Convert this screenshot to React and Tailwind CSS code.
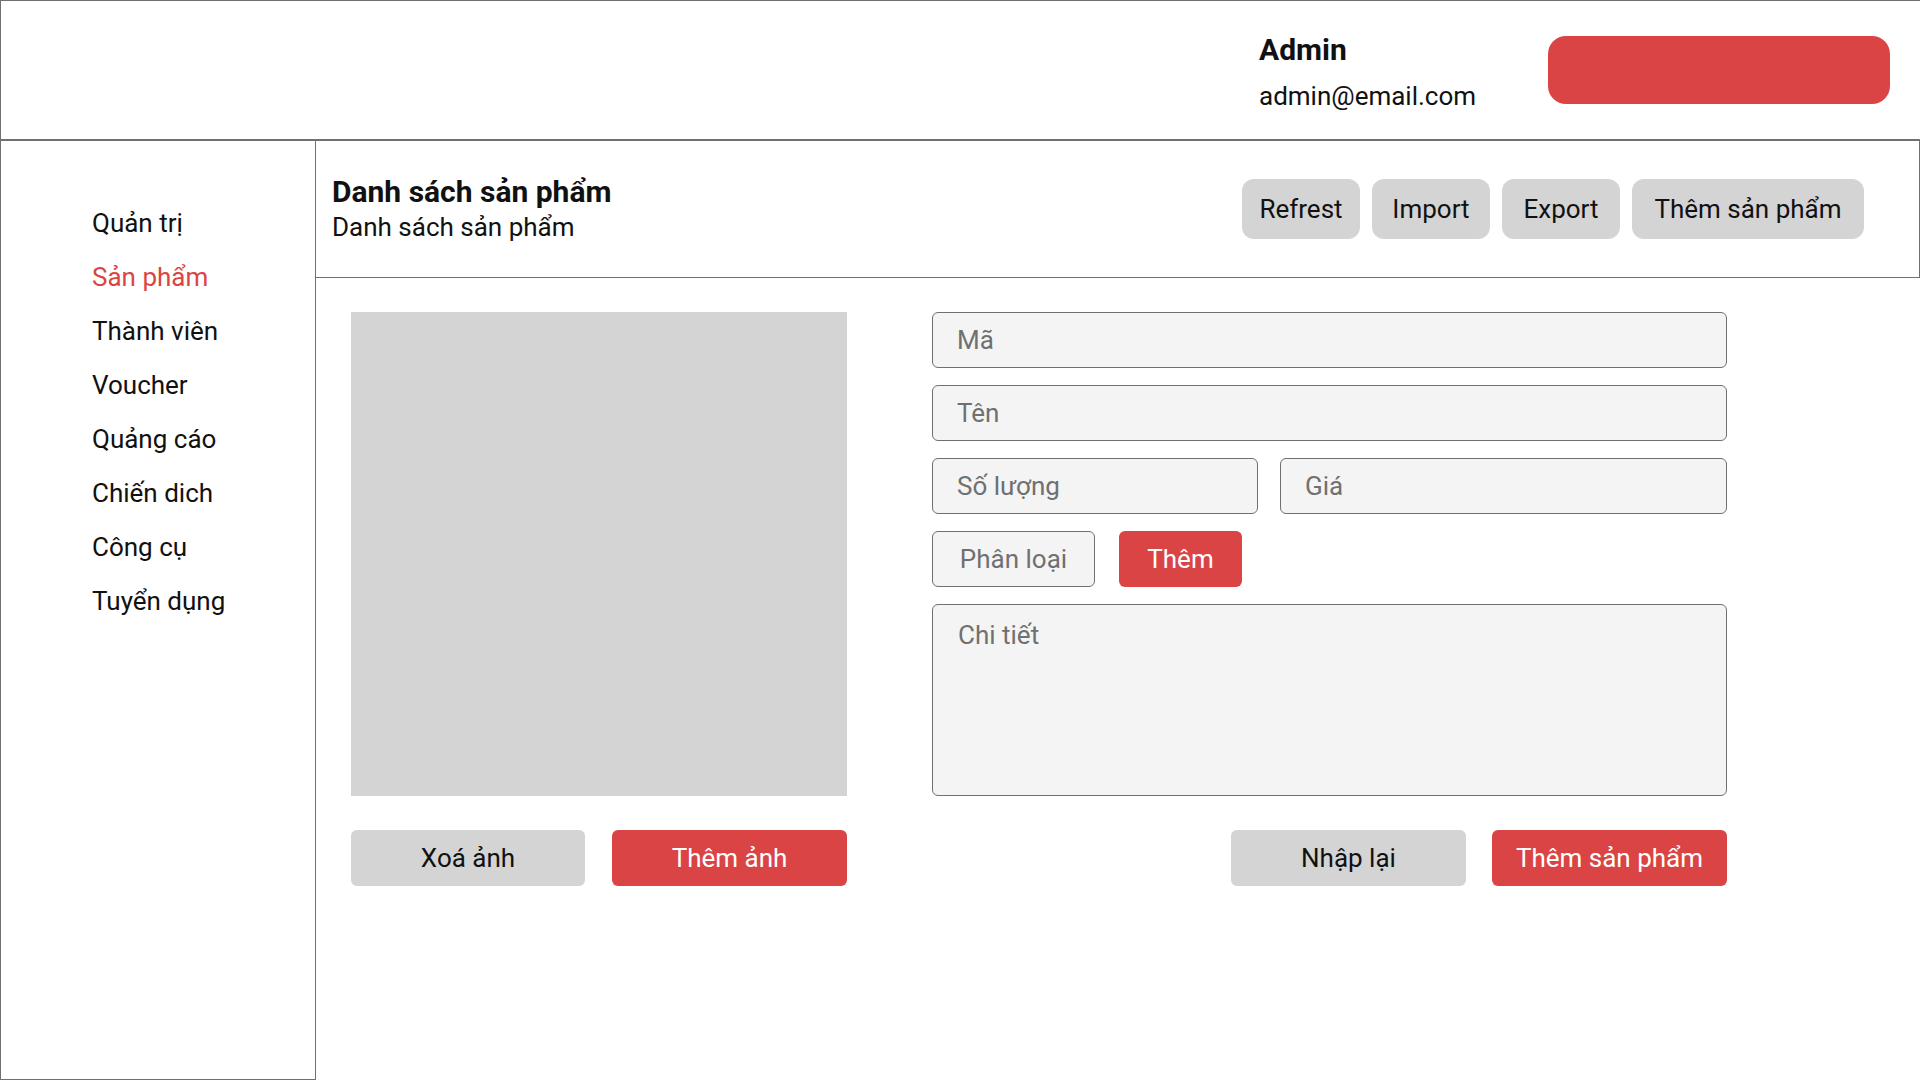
import React from "react";

const navItems = [
  { label: "Quản trị" },
  { label: "Sản phẩm", active: true },
  { label: "Thành viên" },
  { label: "Voucher" },
  { label: "Quảng cáo" },
  { label: "Chiến dich" },
  { label: "Công cụ" },
  { label: "Tuyển dụng" },
];

export default function App() {
  return (
    <div
      className="w-[1920px] h-[1080px] flex flex-col bg-white text-[#111111] overflow-hidden"
      style={{ fontFamily: "Roboto, 'Noto Sans', sans-serif" }}
    >
      {/* Top header */}
      <header className="h-[141px] shrink-0 flex items-center justify-end border-t border-l border-b-2 border-[#707070] pr-[30px]">
        <div className="w-[289px] flex flex-col pt-[4px]">
          <div className="text-[30px] font-bold leading-[36px]">Admin</div>
          <div className="mt-[12px] text-[26px] leading-[32px]">admin@email.com</div>
        </div>
        <button className="w-[342px] h-[68px] rounded-[18px] bg-[#DB4444]"></button>
      </header>

      <div className="flex flex-1 min-h-0">
        {/* Sidebar */}
        <aside className="w-[316px] shrink-0 border-l border-r border-b border-[#707070] pt-[55px] pl-[91px]">
          <nav className="flex flex-col">
            {navItems.map((item) => (
              <div
                key={item.label}
                className={
                  "text-[26px] leading-[54px] " +
                  (item.active ? "text-[#DB4444]" : "text-[#111111]")
                }
              >
                {item.label}
              </div>
            ))}
          </nav>
        </aside>

        {/* Main */}
        <main className="flex-1 flex flex-col min-w-0">
          <div className="h-[137px] shrink-0 flex items-start justify-between border-b border-r border-[#707070] pl-[16px] pr-[55px]">
            <div className="flex flex-col pt-[34px]">
              <div className="text-[30px] font-bold leading-[34px]">Danh sách sản phẩm</div>
              <div className="text-[26px] leading-[36px]">Danh sách sản phẩm</div>
            </div>
            <div className="flex items-center gap-[12px] self-center">
              <button className="w-[118px] h-[60px] rounded-[12px] bg-[#D4D4D4] text-[26px]">Refrest</button>
              <button className="w-[118px] h-[60px] rounded-[12px] bg-[#D4D4D4] text-[26px]">Import</button>
              <button className="w-[118px] h-[60px] rounded-[12px] bg-[#D4D4D4] text-[26px]">Export</button>
              <button className="w-[232px] h-[60px] rounded-[12px] bg-[#D4D4D4] text-[26px]">Thêm sản phẩm</button>
            </div>
          </div>

          <div className="flex pt-[34px] pl-[35px] gap-[85px]">
            {/* Image column */}
            <div className="w-[496px] flex flex-col">
              <div className="h-[484px] bg-[#D4D4D4]"></div>
              <div className="mt-[34px] flex justify-between">
                <button className="w-[234px] h-[56px] rounded-[6px] bg-[#D4D4D4] text-[26px] text-[#111111]">Xoá ảnh</button>
                <button className="w-[235px] h-[56px] rounded-[6px] bg-[#DB4444] text-[26px] text-white">Thêm ảnh</button>
              </div>
            </div>

            {/* Form column */}
            <div className="w-[795px] flex flex-col">
              <div className="flex flex-col gap-[17px]">
                <input
                  className="h-[56px] rounded-[6px] border border-[#707070] bg-[#F4F4F4] px-[24px] text-[26px] outline-none placeholder:text-[#707070]"
                  placeholder="Mã"
                />
                <input
                  className="h-[56px] rounded-[6px] border border-[#707070] bg-[#F4F4F4] px-[24px] text-[26px] outline-none placeholder:text-[#707070]"
                  placeholder="Tên"
                />
                <div className="flex gap-[22px]">
                  <input
                    className="w-[326px] h-[56px] rounded-[6px] border border-[#707070] bg-[#F4F4F4] px-[24px] text-[26px] outline-none placeholder:text-[#707070]"
                    placeholder="Số lượng"
                  />
                  <input
                    className="flex-1 min-w-0 h-[56px] rounded-[6px] border border-[#707070] bg-[#F4F4F4] px-[24px] text-[26px] outline-none placeholder:text-[#707070]"
                    placeholder="Giá"
                  />
                </div>
                <div className="flex gap-[24px]">
                  <button className="w-[163px] h-[56px] rounded-[6px] border border-[#707070] bg-[#F4F4F4] text-[26px] text-[#707070]">Phân loại</button>
                  <button className="w-[123px] h-[56px] rounded-[6px] bg-[#DB4444] text-[26px] text-white">Thêm</button>
                </div>
                <textarea
                  className="h-[192px] resize-none rounded-[6px] border border-[#707070] bg-[#F4F4F4] px-[25px] pt-[15px] text-[26px] leading-[30px] outline-none placeholder:text-[#707070]"
                  placeholder="Chi tiết"
                />
              </div>
              <div className="mt-[34px] flex justify-end gap-[26px]">
                <button className="w-[235px] h-[56px] rounded-[6px] bg-[#D4D4D4] text-[26px] text-[#111111]">Nhập lại</button>
                <button className="w-[235px] h-[56px] rounded-[6px] bg-[#DB4444] text-[26px] text-white">Thêm sản phẩm</button>
              </div>
            </div>
          </div>
        </main>
      </div>
    </div>
  );
}
